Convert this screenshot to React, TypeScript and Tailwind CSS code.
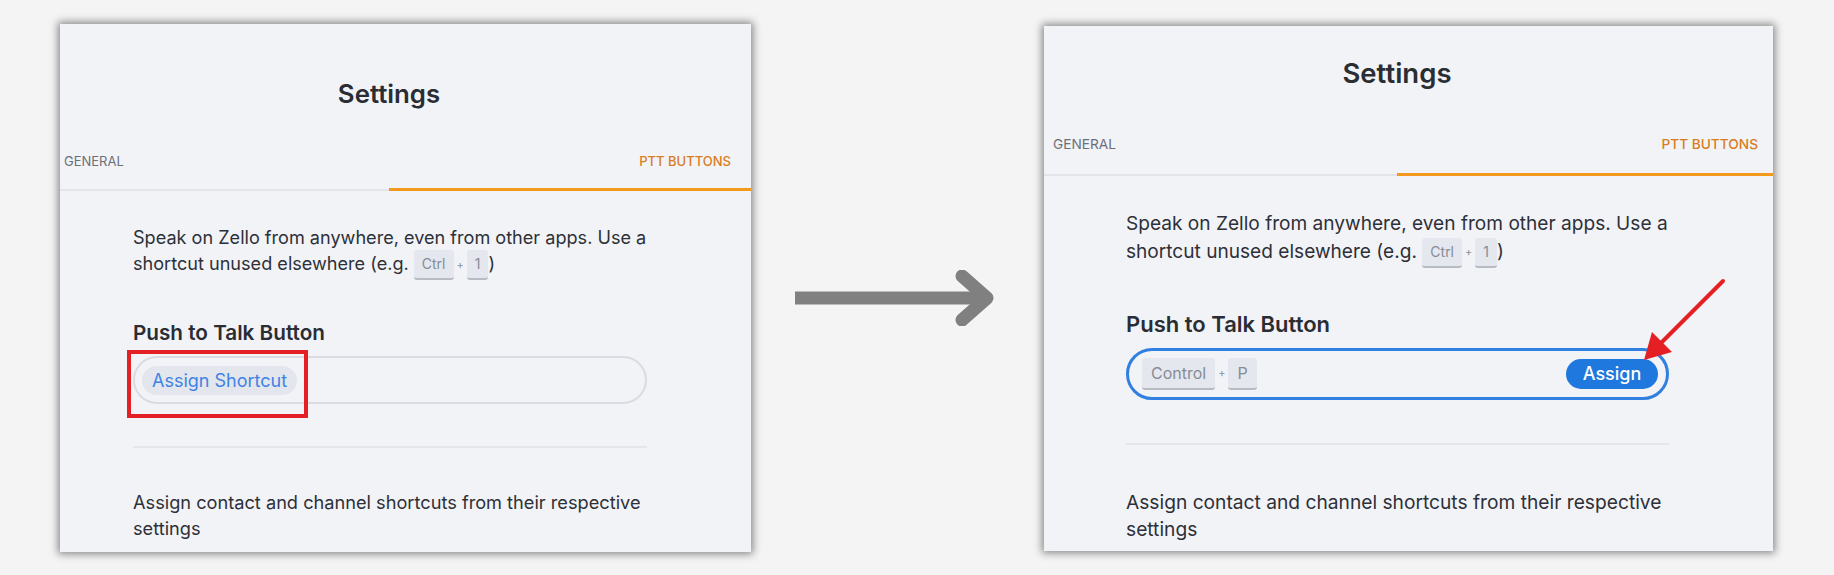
import React from 'react';

function Key({ label, big }: { label: string; big?: boolean }) {
  return (
    <span
      className={
        big
          ? 'inline-flex items-center justify-center h-[32px] px-[9px] bg-[#e4e7ed] rounded-[3px] border-b-2 border-[#b6bbc4] text-[16px] text-[#868c96]'
          : 'inline-flex items-center justify-center h-[30px] px-[8px] bg-[#e4e7ed] rounded-[3px] border-b-2 border-[#b6bbc4] text-[14px] text-[#868c96] align-middle'
      }
    >
      {label}
    </span>
  );
}

function Plus() {
  return <span className="mx-[3px] text-[11px] text-[#8b909a] align-middle">+</span>;
}

function GrayArrow() {
  return (
    <svg width="200" height="56" viewBox="0 0 200 56" className="mt-[270px] ml-[44px] shrink-0">
      <line x1="0" y1="28" x2="190" y2="28" stroke="#808080" strokeWidth="13" />
      <polyline
        points="167,6 192,28 167,50"
        fill="none"
        stroke="#808080"
        strokeWidth="13"
        strokeLinecap="round"
        strokeLinejoin="round"
      />
    </svg>
  );
}

export default function App() {
  return (
    <div
      className="w-[1834px] h-[575px] bg-[#f4f4f4] flex items-start pl-[60px] overflow-hidden"
      style={{ fontFamily: 'Inter, "Noto Sans", sans-serif' }}
    >
      {/* Before */}
      <section className="w-[691px] h-[528px] mt-[24px] bg-[#f2f3f7] shadow-[0_0_8px_2px_rgba(0,0,0,0.45)] overflow-hidden flex flex-col shrink-0">
        <h1 className="w-[658px] pt-[54px] text-center text-[25.8px] leading-[32px] font-semibold text-[#2a2d33]">Settings</h1>
        <div className="mt-[43px] flex">
          <div className="w-[329px] pl-[4px] pb-[20px] border-b-2 border-[#e2e5ea] text-[13px] leading-[16px] text-[#6b7079]">
            GENERAL
          </div>
          <div className="w-[362px] pr-[20px] pb-[19px] border-b-[3px] border-[#f39a1e] text-right text-[13px] leading-[16px] font-medium text-[#d87d22]">
            PTT BUTTONS
          </div>
        </div>
        <div className="pl-[73px] w-[610px]">
          <p className="mt-[33px] w-[530px] text-[18.1px] leading-[26px] text-[#2d3038]">
            Speak on Zello from anywhere, even from other apps. Use a shortcut unused elsewhere (e.g.{' '}
            <Key label="Ctrl" />
            <Plus />
            <Key label="1" />)
          </p>
          <h2 className="mt-[40px] text-[20.7px] leading-[26px] font-semibold text-[#2a2d33]">Push to Talk Button</h2>
          <div className="relative mt-[10px] w-[514px] h-[48px] rounded-full border-2 border-[#d8dbe2] flex items-center pl-[7px]">
            <span className="h-[29px] px-[10px] rounded-full bg-[#e3e6ed] text-[18px] leading-[29px] text-[#3f83e4]">
              Assign Shortcut
            </span>
            <div className="absolute left-[-8px] top-[-8px] w-[181px] h-[68px] border-[4px] border-[#e42024]" />
          </div>
          <div className="mt-[42px] w-[514px] h-[2px] bg-[#e3e6eb]" />
          <p className="mt-[41px] w-[530px] text-[18.2px] leading-[26px] text-[#2d3038]">
            Assign contact and channel shortcuts from their respective settings
          </p>
        </div>
      </section>

      <GrayArrow />

      {/* After */}
      <section className="relative w-[729px] h-[525px] mt-[26px] ml-[49px] bg-[#f2f3f7] shadow-[0_0_8px_2px_rgba(0,0,0,0.45)] overflow-hidden flex flex-col shrink-0">
        <h1 className="w-[706px] pt-[30px] text-center text-[27.5px] leading-[34px] font-semibold text-[#2a2d33]">Settings</h1>
        <div className="mt-[46px] flex">
          <div className="w-[353px] pl-[9px] pb-[21px] border-b-2 border-[#e2e5ea] text-[13.7px] leading-[17px] text-[#6b7079]">
            GENERAL
          </div>
          <div className="w-[376px] pr-[15px] pb-[20px] border-b-[3px] border-[#f39a1e] text-right text-[13.7px] leading-[17px] font-medium text-[#d87d22]">
            PTT BUTTONS
          </div>
        </div>
        <div className="pl-[82px] w-[645px]">
          <p className="mt-[34px] w-[560px] text-[19.1px] leading-[27.5px] text-[#2d3038]">
            Speak on Zello from anywhere, even from other apps. Use a shortcut unused elsewhere (e.g.{' '}
            <Key label="Ctrl" />
            <Plus />
            <Key label="1" />)
          </p>
          <h2 className="mt-[42px] text-[22px] leading-[28px] font-semibold text-[#2a2d33]">Push to Talk Button</h2>
          <div className="mt-[10px] w-[543px] h-[52px] rounded-full border-[3px] border-[#2f80e0] flex items-center pl-[13px] pr-[8px]">
            <Key label="Control" big />
            <Plus />
            <Key label="P" big />
            <button className="ml-auto h-[30px] w-[92px] rounded-full bg-[#1f78dd] text-white text-[18px] font-medium">
              Assign
            </button>
          </div>
          <div className="mt-[43px] w-[543px] h-[2px] bg-[#e3e6eb]" />
          <p className="mt-[44px] w-[560px] text-[19.2px] leading-[27.5px] text-[#2d3038]">
            Assign contact and channel shortcuts from their respective settings
          </p>
        </div>
        <svg className="absolute left-[590px] top-[250px]" width="100" height="90" viewBox="0 0 100 90">
          <line x1="89" y1="5" x2="24" y2="70" stroke="#e42024" strokeWidth="4" strokeLinecap="round" />
          <polygon points="10,84 18,56 38,76" fill="#e42024" />
        </svg>
      </section>
    </div>
  );
}
